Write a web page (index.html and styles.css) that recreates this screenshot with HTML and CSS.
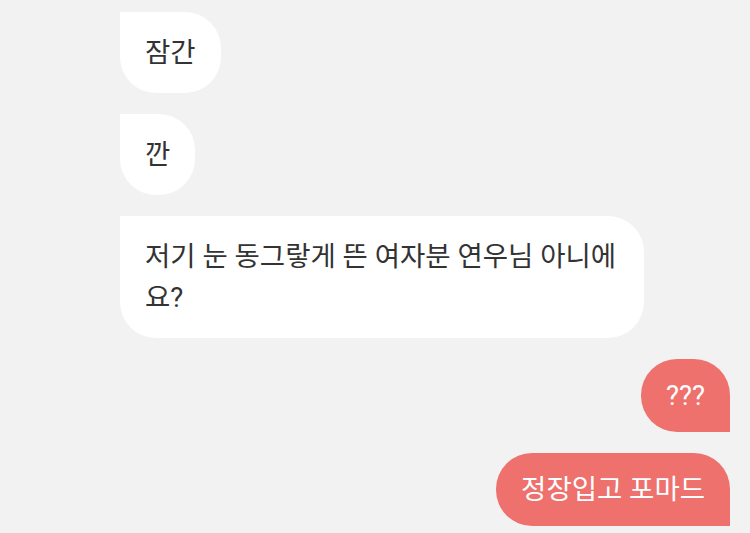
FILE: index.html
```html
<!DOCTYPE html>
<html lang="ko">
<head>
    <meta charset="UTF-8">
    <meta name="viewport" content="width=device-width, initial-scale=1.0">
    <title>Chat</title>
    <link rel="stylesheet" href="styles.css">
</head>
<body>
    <div class="chat">
        <div class="bubble other">잠간</div>
        <div class="bubble other">깐</div>
        <div class="bubble other">저기 눈 동그랗게 뜬 여자분 연우님 아니에요?</div>
        <div class="bubble mine">???</div>
        <div class="bubble mine">정장입고 포마드</div>
    </div>
</body>
</html>
```

FILE: styles.css
```css
body {
    margin: 0;
    background-color: #f2f2f2;
    font-family: Roboto, "Noto Sans CJK KR", sans-serif;
}
.chat {
    display: flex;
    flex-direction: column;
    align-items: flex-start;
    gap: 21px;
    padding: 12px 20px 0 120px;
}
.bubble {
    box-sizing: border-box;
    font-size: 27.5px;
    line-height: 41px;
    padding: 20px 25px;
    max-width: 524px;
}
.other {
    background-color: #fff;
    color: #333;
    border-radius: 0 36px 36px 36px;
}
.mine {
    align-self: flex-end;
    background-color: #ee716d;
    color: #fff;
    padding: 16px 25px;
    border-radius: 36px 36px 0 36px;
}
```
